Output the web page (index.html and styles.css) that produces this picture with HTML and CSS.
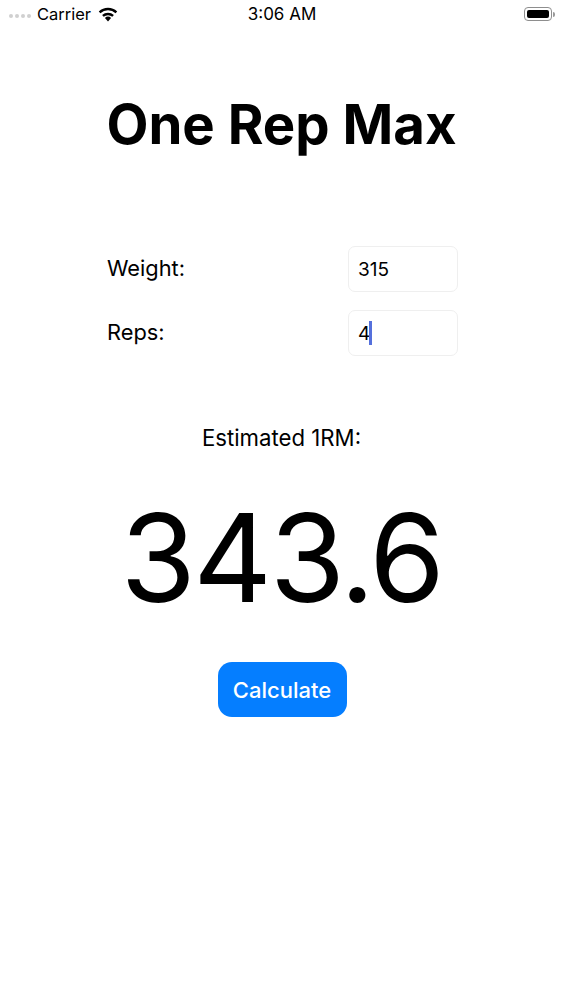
FILE: index.html
```html
<!DOCTYPE html>
<html lang="en">
<head>
    <meta charset="UTF-8">
    <title>One Rep Max</title>
    <link rel="stylesheet" href="styles.css">
</head>
<body>
    <div class="status-bar">
        <div class="status-left">
            <div class="signal">
                <span></span><span></span><span></span><span></span>
            </div>
            <span class="carrier">Carrier</span>
            <svg class="wifi" width="20" height="15" viewBox="0 0 20 15">
                <path d="M10 14.5 L6.9 11 A4.6 4.6 0 0 1 13.1 11 Z" fill="#000"/>
                <path d="M4.9 8.9 A7.6 7.6 0 0 1 15.1 8.9" fill="none" stroke="#000" stroke-width="2.4"/>
                <path d="M1.6 5.3 A12.4 12.4 0 0 1 18.4 5.3" fill="none" stroke="#000" stroke-width="2.4"/>
            </svg>
        </div>
        <span class="time">3:06 AM</span>
        <div class="battery">
            <div class="battery-body"><div class="battery-fill"></div></div>
            <div class="battery-tip"></div>
        </div>
    </div>

    <div class="content">
        <h1 class="title">One Rep Max</h1>

        <div class="form">
            <div class="form-row">
                <label>Weight:</label>
                <div class="field">315</div>
            </div>
            <div class="form-row">
                <label>Reps:</label>
                <div class="field">4<span class="caret"></span></div>
            </div>
        </div>

        <p class="result-label">Estimated 1RM:</p>
        <p class="result">343.6</p>
        <button class="calculate">Calculate</button>
    </div>
</body>
</html>
```

FILE: styles.css
```css
* {
    margin: 0;
    padding: 0;
    box-sizing: border-box;
}

body {
    font-family: Inter, "Liberation Sans", Arial, sans-serif;
    background: #fff;
    color: #000;
    height: 1000px;
    overflow: hidden;
}

.status-bar {
    display: grid;
    grid-template-columns: 1fr auto 1fr;
    align-items: center;
    height: 28px;
    padding: 0 8px 0 9px;
    font-size: 16.5px;
}

.status-left {
    display: flex;
    align-items: center;
}

.signal {
    display: flex;
    gap: 2px;
    margin-top: 4px;
    margin-right: 6px;
}

.signal span {
    width: 4px;
    height: 4px;
    border-radius: 50%;
    background: #d0d0d0;
}

.carrier {
    margin-right: 7px;
}

.wifi {
    display: block;
}

.time {
    font-size: 17px;
}

.battery {
    display: flex;
    align-items: center;
    justify-content: flex-end;
}

.battery-body {
    width: 28px;
    height: 14px;
    padding: 2px;
    border: 1px solid #8e8e8e;
    border-radius: 4px;
}

.battery-fill {
    height: 100%;
    background: #000;
    border-radius: 2px;
}

.battery-tip {
    width: 2px;
    height: 5px;
    margin-left: 1px;
    background: #999;
    border-radius: 0 2px 2px 0;
}

.content {
    display: flex;
    flex-direction: column;
    align-items: center;
}

.title {
    margin-top: 64px;
    font-size: 54.5px;
    line-height: 64px;
    font-weight: 700;
}

.form {
    width: 352px;
    margin-top: 90px;
    margin-left: 1px;
}

.form-row {
    display: flex;
    justify-content: space-between;
    align-items: center;
    height: 46px;
    margin-bottom: 18px;
    font-size: 21.8px;
}

.form-row label {
    margin-top: -3px;
    margin-left: 1px;
}

.field {
    display: flex;
    align-items: center;
    width: 110px;
    height: 46px;
    padding-left: 9px;
    font-size: 19px;
    border: 1px solid #efefef;
    border-radius: 7px;
}

.caret {
    width: 3px;
    height: 24px;
    margin-left: -1px;
    background: #5570dc;
}

.result-label {
    margin-top: 52px;
    font-size: 22.2px;
    line-height: 24px;
}

.result {
    margin-top: 40px;
    font-size: 122px;
    line-height: 136px;
    letter-spacing: -2.5px;
}

.calculate {
    width: 129px;
    height: 55px;
    margin-top: 36px;
    margin-left: 1px;
    font-family: inherit;
    font-size: 22px;
    font-weight: 500;
    color: #fff;
    background: #057eff;
    border: none;
    border-radius: 14px;
}
```
